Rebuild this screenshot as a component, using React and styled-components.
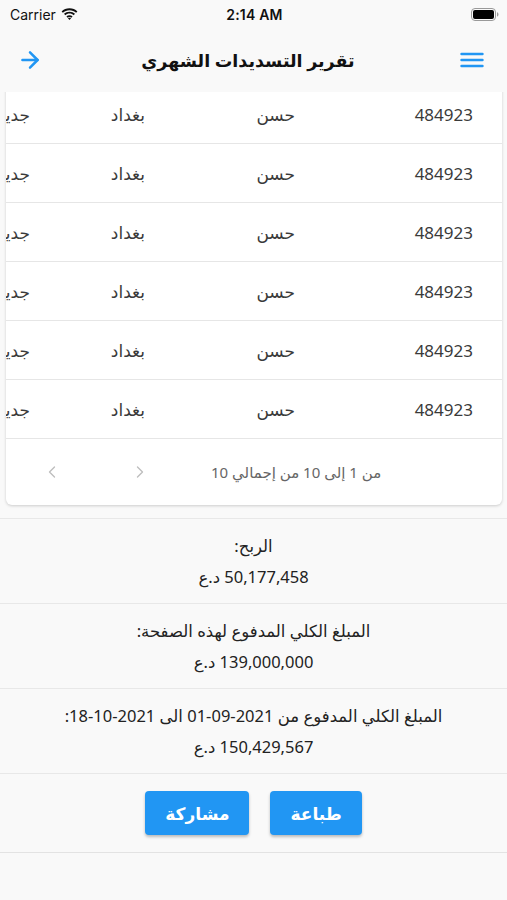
import React from 'react'
import styled, { createGlobalStyle } from 'styled-components'
import { ArrowRight, ChevronLeft, ChevronRight } from 'lucide-react'

const rows = Array.from({ length: 6 }, () => ({
  id: '484923',
  name: 'حسن',
  city: 'بغداد',
  status: 'جديد',
}))

const totals = [
  { label: 'الربح:', value: '50,177,458 د.ع' },
  { label: 'المبلغ الكلي المدفوع لهذه الصفحة:', value: '139,000,000 د.ع' },
  { label: 'المبلغ الكلي المدفوع من 2021-09-01 الى 2021-10-18:', value: '150,429,567 د.ع' },
]

const App = () => {
  return (
    <Page>
      <GlobalStyle />
      <StatusBar>
        <Carrier>
          Carrier
          <svg width="17" height="12" viewBox="0 0 17 12">
            <path d="M8.5 2.2c2.6 0 4.9 1 6.6 2.6l1.3-1.4C14.4 1.5 11.6.3 8.5.3S2.6 1.5.6 3.4l1.3 1.4C3.6 3.2 5.9 2.2 8.5 2.2z" fill="#111" />
            <path d="M8.5 5.6c1.6 0 3.1.6 4.2 1.6l1.3-1.4C12.6 4.5 10.6 3.7 8.5 3.7S4.4 4.5 3 5.8l1.3 1.4c1.1-1 2.6-1.6 4.2-1.6z" fill="#111" />
            <path d="M8.5 9.1c.7 0 1.3.3 1.8.7L11.6 8.4C10.8 7.6 9.7 7.2 8.5 7.2S6.2 7.6 5.4 8.4l1.3 1.4c.5-.4 1.100-.7 1.8-.7zM8.5 12l1.6-1.7c-.4-.4-1-.6-1.6-.6s-1.2.2-1.6.6z" fill="#111" />
          </svg>
        </Carrier>
        <Clock>2:14 AM</Clock>
        <Battery>
          <svg width="28" height="13" viewBox="0 0 28 13">
            <rect x="0.5" y="0.5" width="24" height="12" rx="3.5" fill="none" stroke="#999" />
            <rect x="2" y="2" width="21" height="9" rx="2" fill="#000" />
            <path d="M26 4.3v4.4c.9-.3 1.5-1.2 1.5-2.2s-.6-1.9-1.5-2.2z" fill="#999" />
          </svg>
        </Battery>
      </StatusBar>

      <Header>
        <IconButton aria-label="menu">
          <svg width="24" height="24" viewBox="0 0 24 24">
            <path d="M1.5 6h21M1.5 12h21M1.5 18h21" stroke="#2196f3" strokeWidth="2.4" strokeLinecap="round" />
          </svg>
        </IconButton>
        <Title>تقرير التسديدات الشهري</Title>
        <IconButton aria-label="back">
          <ArrowRight size={26} color="#2196f3" strokeWidth={2.3} />
        </IconButton>
      </Header>

      <Scroller>
        <Card>
          {rows.map((r, i) => (
            <Row key={i}>
              <Cell>{r.id}</Cell>
              <Cell>{r.name}</Cell>
              <Cell>{r.city}</Cell>
              <Cell>{r.status}</Cell>
            </Row>
          ))}
          <Pagination>
            <PageLabel>من 1 إلى 10 من إجمالي 10</PageLabel>
            <PageButton aria-label="next">
              <ChevronRight size={20} strokeWidth={1.6} />
            </PageButton>
            <PageButton aria-label="previous">
              <ChevronLeft size={20} strokeWidth={1.6} />
            </PageButton>
          </Pagination>
        </Card>

        <Summary>
          {totals.map((t) => (
            <SummaryItem key={t.label}>
              <SummaryText>{t.label}</SummaryText>
              <SummaryText>{t.value}</SummaryText>
            </SummaryItem>
          ))}
        </Summary>

        <Actions>
          <ActionButton>طباعة</ActionButton>
          <ActionButton>مشاركة</ActionButton>
        </Actions>
      </Scroller>
    </Page>
  )
}

const GlobalStyle = createGlobalStyle`
  html, body {
    margin: 0;
    padding: 0;
    background: #f9f9f9;
  }
  * {
    box-sizing: border-box;
  }
`

const Page = styled.div`
  width: 507px;
  height: 900px;
  background: #f9f9f9;
  font-family: "Noto Sans", "DejaVu Sans", sans-serif;
  color: #333;
  overflow: hidden;
  display: flex;
  flex-direction: column;
`

const StatusBar = styled.div`
  height: 28px;
  display: flex;
  align-items: center;
  justify-content: space-between;
  padding: 0 8px 0 10px;
  font-family: "Inter", "Liberation Sans", sans-serif;
  font-size: 14px;
  color: #111;
`

const Carrier = styled.div`
  flex: 1;
  display: flex;
  align-items: center;
  gap: 5px;
  svg {
    margin-top: -1px;
  }
`

const Clock = styled.div`
  font-weight: 600;
  letter-spacing: 0.2px;
`

const Battery = styled.div`
  flex: 1;
  display: flex;
  justify-content: flex-end;
  svg {
    display: block;
  }
`

const Header = styled.div`
  height: 64px;
  display: flex;
  flex-direction: row-reverse;
  align-items: center;
  justify-content: space-between;
  padding: 0 21px 0 16px;
  position: relative;
  z-index: 1;
  background: #f9f9f9;
`

const IconButton = styled.div`
  width: 28px;
  height: 28px;
  display: flex;
  align-items: center;
  justify-content: center;
`

const Title = styled.h1`
  margin: 0 6px 0 0;
  font-size: 17.5px;
  font-weight: 700;
  color: #111;
  direction: rtl;
`

const Scroller = styled.div`
  flex: 1;
  overflow: hidden;
  direction: rtl;
  display: flex;
  flex-direction: column;
`

const Card = styled.div`
  margin: -7px 5px 0 6px;
  background: #fff;
  border-radius: 0 0 6px 6px;
  box-shadow: 0 1px 3px rgba(0, 0, 0, 0.18);
  overflow: hidden;
`

const Row = styled.div`
  height: 59px;
  display: grid;
  grid-template-columns: 178px 150px 115px 150px;
  align-items: center;
  border-bottom: 1px solid #e6e6e6;
`

const Cell = styled.div`
  padding-right: 29px;
  font-size: 17px;
  color: #3a3a3a;
  white-space: nowrap;
`

const Pagination = styled.div`
  height: 66px;
  display: flex;
  align-items: center;
  justify-content: flex-end;
  padding-left: 22px;
  color: #666;
`

const PageLabel = styled.div`
  font-size: 15px;
  color: #666;
  margin-left: 47px;
`

const PageButton = styled.div`
  width: 48px;
  height: 48px;
  display: flex;
  align-items: center;
  justify-content: center;
  color: #bdbdbd;
  & + & {
    margin-right: 40px;
  }
`

const Summary = styled.div`
  margin-top: 13px;
  border-top: 1px solid #e8e8e8;
`

const SummaryItem = styled.div`
  height: 85px;
  display: flex;
  flex-direction: column;
  align-items: center;
  justify-content: center;
  gap: 9px;
  border-bottom: 1px solid #e8e8e8;
`

const SummaryText = styled.div`
  font-size: 16.5px;
  color: #222;
  line-height: 22px;
`

const Actions = styled.div`
  height: 79px;
  display: flex;
  align-items: center;
  justify-content: center;
  gap: 21px;
  border-bottom: 1px solid #e3e3e3;
`

const ActionButton = styled.button`
  height: 44px;
  min-width: 90px;
  padding: 0 20px;
  border: none;
  border-radius: 4px;
  background: #2196f3;
  color: #fff;
  font-family: "Noto Sans", "DejaVu Sans", sans-serif;
  font-size: 17px;
  font-weight: 700;
  box-shadow: 0 2px 3px rgba(0, 0, 0, 0.25);
`

export default App
